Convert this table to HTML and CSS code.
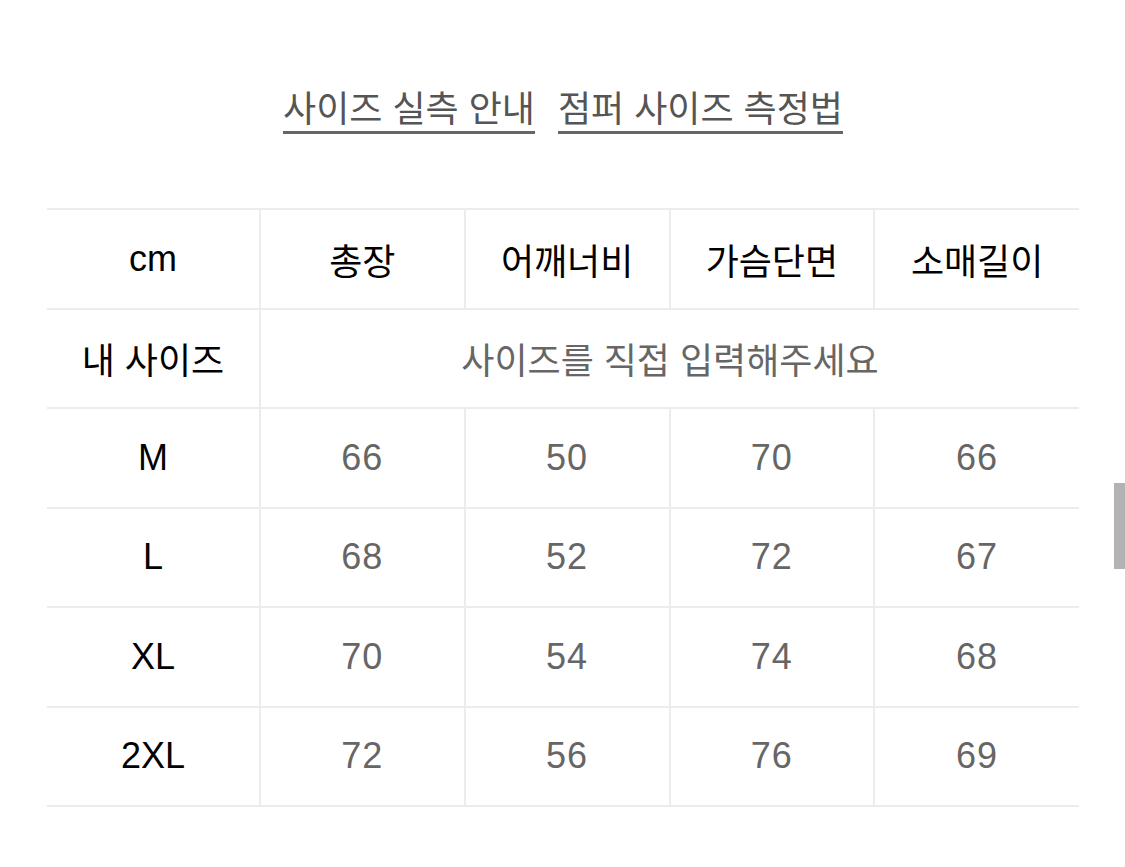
FILE: index.html
```html
<!DOCTYPE html>
<html lang="ko">
<head>
<meta charset="utf-8">
<link rel="stylesheet" href="styles.css">
</head>
<body>
<div class="page">
  <div class="links">
    <a class="link" href="#">사이즈 실측 안내</a>
    <a class="link" href="#">점퍼 사이즈 측정법</a>
  </div>
  <table class="size-table">
    <tr class="head">
      <th>cm</th><th>총장</th><th>어깨너비</th><th>가슴단면</th><th>소매길이</th>
    </tr>
    <tr>
      <th>내 사이즈</th><td colspan="4" class="hint">사이즈를 직접 입력해주세요</td>
    </tr>
    <tr><th>M</th><td>66</td><td>50</td><td>70</td><td>66</td></tr>
    <tr><th>L</th><td>68</td><td>52</td><td>72</td><td>67</td></tr>
    <tr><th>XL</th><td>70</td><td>54</td><td>74</td><td>68</td></tr>
    <tr><th>2XL</th><td>72</td><td>56</td><td>76</td><td>69</td></tr>
  </table>
</div>
<div class="scrollbar"></div>
</body>
</html>
```
FILE: styles.css
```css
html, body {
  margin: 0;
  padding: 0;
  background: #fff;
}
body {
  font-family: "Liberation Sans", "Noto Sans CJK KR", sans-serif;
  width: 1125px;
  height: 867px;
  overflow: hidden;
}
.page {
  padding: 89px 46px 0 47px;
}
.links {
  display: flex;
  justify-content: center;
  gap: 23px;
  height: 119px;
}
.link {
  font-size: 36px;
  line-height: 42px;
  height: 42px;
  color: #555;
  text-decoration: none;
  border-bottom: 3px solid #666;
}
.size-table {
  width: 1032px;
  border-collapse: collapse;
  table-layout: fixed;
}
.size-table th, .size-table td {
  height: 97.5px;
  padding: 0;
  text-align: center;
  font-size: 36px;
  border-top: 2px solid #ececec;
  border-bottom: 2px solid #ececec;
  border-left: 2px solid #ececec;
}
.size-table tr > :first-child {
  border-left: none;
  width: 212px;
}
.size-table th {
  font-weight: normal;
  color: #000;
}
.size-table td {
  color: #666;
  letter-spacing: 1px;
}
.size-table td.hint {
  color: #666;
  letter-spacing: 0;
}
.scrollbar {
  position: absolute;
  left: 1114px;
  top: 483px;
  width: 11px;
  height: 86px;
  background: #b3b3b3;
}
```
